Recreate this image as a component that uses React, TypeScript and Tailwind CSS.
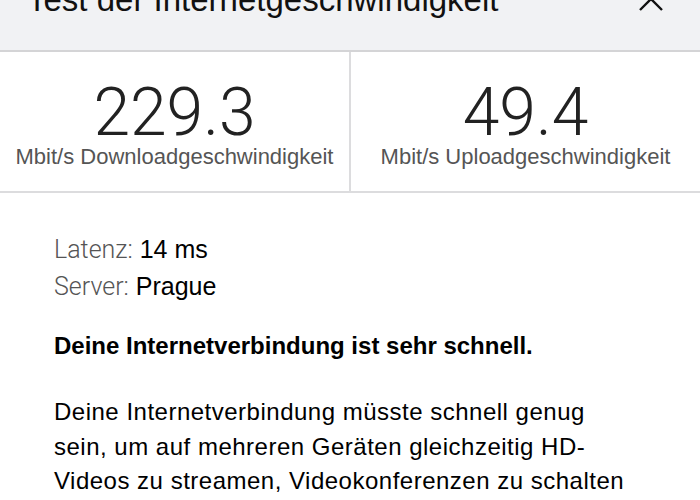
function Stat({ value, label }: { value: string; label: string }) {
  return (
    <div className="flex flex-1 flex-col items-center pt-[31px]">
      <div className="font-['Roboto',sans-serif] text-[66px] font-light leading-[60px] text-[#222]">
        {value}
      </div>
      <div className="mt-[2px] font-['Liberation_Sans',sans-serif] text-[22px] leading-[24px] text-[#555]">
        {label}
      </div>
    </div>
  );
}

function App() {
  return (
    <div className="h-[500px] w-[700px] overflow-hidden bg-white font-['Liberation_Sans',sans-serif] text-black">
      <header className="flex h-[52px] items-start justify-between border-b-2 border-[#d4d4d6] bg-[#f1f2f4] pl-[27px] pr-[37px]">
        <h1 className="-mt-[20px] text-[33px] leading-[40px] text-[#111]">
          Test der Internetgeschwindigkeit
        </h1>
        <svg
          className="-mt-[13px]"
          width="24"
          height="24"
          viewBox="0 0 24 24"
          fill="none"
          stroke="#111"
          strokeWidth="2.4"
        >
          <path d="M1 1 L23 23 M23 1 L1 23" />
        </svg>
      </header>

      <div className="flex h-[141px] border-b-2 border-[#dcdcde]">
        <Stat value="229.3" label="Mbit/s Downloadgeschwindigkeit" />
        <div className="w-[2px] bg-[#dcdcde]" />
        <Stat value="49.4" label="Mbit/s Uploadgeschwindigkeit" />
      </div>

      <main className="w-[640px] pl-[54px] pt-[38px]">
        <div className="text-[25px] leading-[36px]">
          <p>
            <span className="font-['Roboto',sans-serif] font-light text-[#555]">Latenz:</span>{" "}
            <span>14 ms</span>
          </p>
          <p>
            <span className="font-['Roboto',sans-serif] font-light text-[#555]">Server:</span>{" "}
            <span>Prague</span>
          </p>
        </div>
        <p className="mt-[27px] text-[24px] font-bold leading-[28px]">
          Deine Internetverbindung ist sehr schnell.
        </p>
        <p className="mt-[35px] text-[24px] leading-[34.5px] tracking-[0.5px]">
          Deine Internetverbindung müsste schnell genug sein, um auf mehreren
          Geräten gleichzeitig HD-Videos zu streamen, Videokonferenzen zu
          schalten und Onlinespiele zu spielen.
        </p>
      </main>
    </div>
  );
}

export default App;
